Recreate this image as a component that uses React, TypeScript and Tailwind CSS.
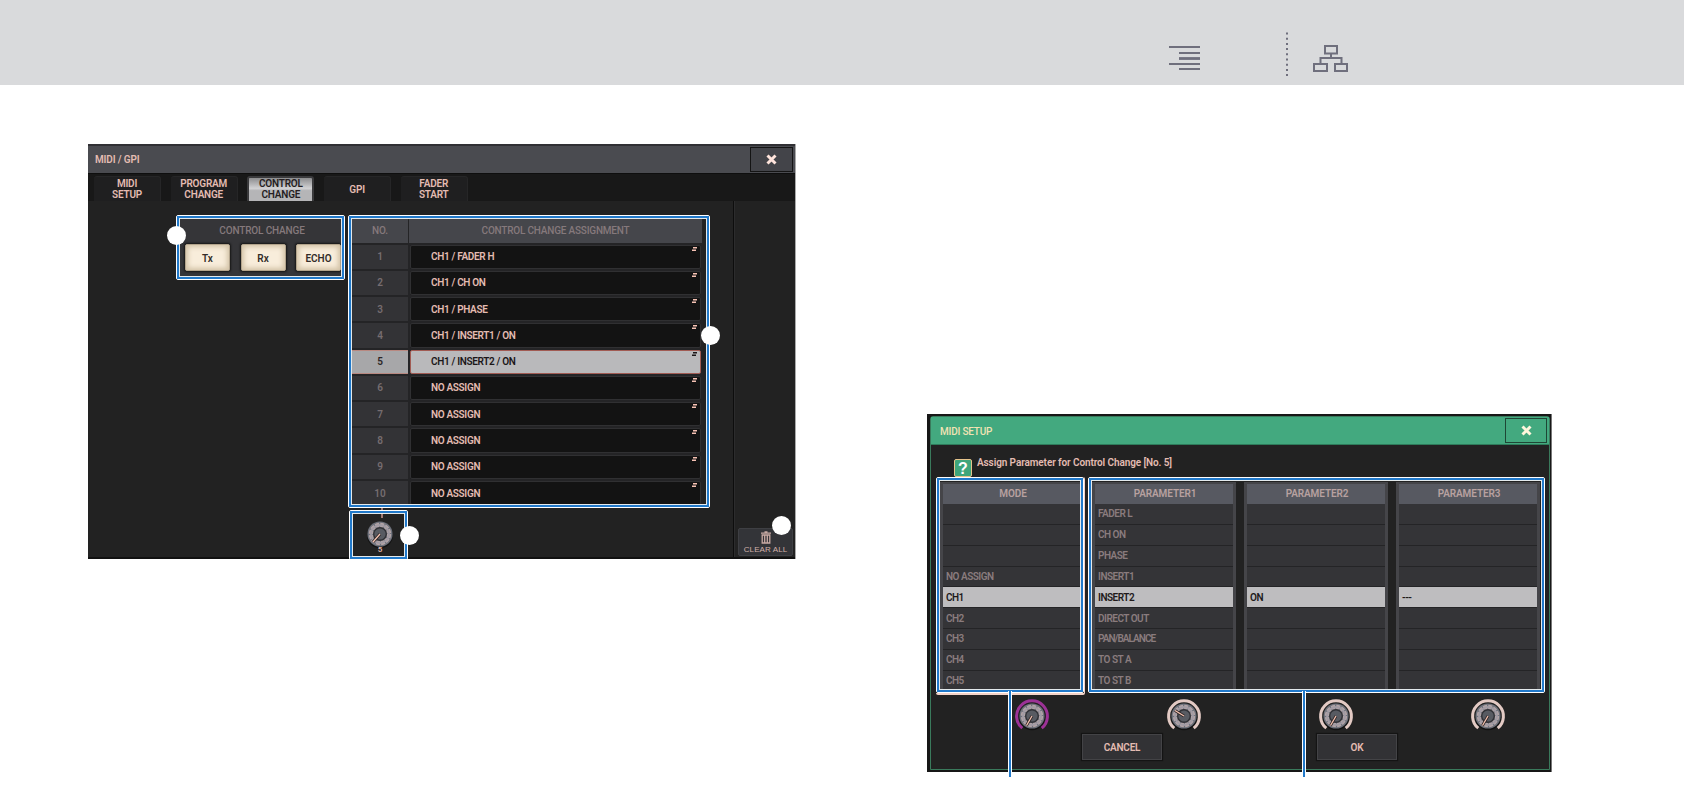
import clsx from "clsx";

const assignments = [
  "CH1 / FADER H",
  "CH1 / CH ON",
  "CH1 / PHASE",
  "CH1 / INSERT1 / ON",
  "CH1 / INSERT2 / ON",
  "NO ASSIGN",
  "NO ASSIGN",
  "NO ASSIGN",
  "NO ASSIGN",
  "NO ASSIGN",
];

const tabs = [
  ["MIDI", "SETUP"],
  ["PROGRAM", "CHANGE"],
  ["CONTROL", "CHANGE"],
  ["GPI"],
  ["FADER", "START"],
];

const modes = ["", "", "", "NO ASSIGN", "CH1", "CH2", "CH3", "CH4", "CH5"];

const parameters = [
  {
    title: "PARAMETER1",
    rows: [
      "FADER L",
      "CH ON",
      "PHASE",
      "INSERT1",
      "INSERT2",
      "DIRECT OUT",
      "PAN/BALANCE",
      "TO ST A",
      "TO ST B",
    ],
  },
  { title: "PARAMETER2", rows: ["", "", "", "", "ON", "", "", "", ""] },
  { title: "PARAMETER3", rows: ["", "", "", "", "---", "", "", "", ""] },
];

function Cross({ color }: { color: string }) {
  return (
    <svg width="11" height="11" viewBox="0 0 11 11">
      <path d="M1.5 1.5l8 8M9.5 1.5l-8 8" stroke={color} strokeWidth="3" />
    </svg>
  );
}

// Blue frame with a white edge on both sides
function Frame({ className }: { className: string }) {
  return (
    <div className={clsx("absolute border border-white rounded-[2px]", className)}>
      <div className="w-full h-full border-2 border-[#2179ca]">
        <div className="w-full h-full border border-[#e4eaec]" />
      </div>
    </div>
  );
}

function Dot({ className }: { className: string }) {
  return (
    <div
      className={clsx("absolute w-[19px] h-[19px] rounded-full bg-white", className)}
    />
  );
}

function Knob({ ring, x, y }: { ring?: string; x: number; y: number }) {
  return (
    <svg width="36" height="36" viewBox="-18 -18 36 36" className="block shrink-0">
      <circle r="13" cy="1.2" fill="#121212" />
      <circle r="12.6" fill="#6d717b" />
      <circle
        r="9"
        fill="none"
        stroke="#b3a4a6"
        strokeWidth="4.4"
        strokeDasharray="3.6 1.11"
      />
      <circle r="9" fill="none" stroke="#a19ba4" strokeWidth="2" />
      <circle r="7" fill="#303136" />
      <circle r="5.6" fill="#585b62" />
      <path d={`M0 0L${x} ${y}`} stroke="#2a2223" strokeWidth="2.8" />
      <path d={`M0 0L${x} ${y}`} stroke="#f6c4b2" strokeWidth="1.3" />
      {ring && (
        <path
          d="M-9.700 12.200A15.400 15.400 0 1 1 9.700 12.200"
          fill="none"
          stroke={ring}
          strokeWidth="3"
        />
      )}
    </svg>
  );
}

function Header() {
  return (
    <header className="h-[85px] bg-[#d9dadc] flex items-start pl-[1169px]">
      <svg width="31" height="26" viewBox="0 0 31 26" className="mt-[45px]">
        <g stroke="#6f6f7d" strokeWidth="2">
          <path d="M0 2h31M10 8h21M0 19h31M10 24h21" />
          <path d="M10 13.5h21" strokeWidth="2.8" />
        </g>
      </svg>
      <svg width="2" height="46" viewBox="0 0 2 46" className="ml-[86px] mt-8">
        <path d="M1 .5v45" stroke="#6f6f7d" strokeWidth="2" strokeDasharray="2 3.2" />
      </svg>
      <svg
        width="36"
        height="28"
        viewBox="0 0 36 28"
        fill="none"
        stroke="#6f6f7d"
        strokeWidth="2"
        className="ml-[25px] mt-[45px]"
      >
        <path d="M12 1h12v7.500H12zM1 19h13v7H1zM22 19h12v7H22zM18 8.500v4.500M7.500 19v-6h21v6" />
      </svg>
    </header>
  );
}

function AssignmentTable() {
  return (
    <div className="w-[351px] h-[286px] overflow-hidden bg-[#242426]">
      <div className="flex gap-px h-6 text-[#85797c] font-medium mb-[0.5px]">
        <div className="w-[56px] bg-[#45464b] flex items-center justify-center pb-0.5">
          NO.
        </div>
        <div className="w-[293px] bg-[#45464b] flex items-center justify-center pb-0.5 tracking-[-0.2px]">
          CONTROL CHANGE ASSIGNMENT
        </div>
      </div>
      {assignments.map((name, i) => {
        const selected = i === 4;
        return (
          <div key={i} className="flex gap-0.5 h-[26.27px] pt-px pb-px">
            <div
              className={clsx(
                "w-[56px] flex items-center justify-center",
                selected
                  ? "bg-[#a7a7a9] text-[#2b2526] border-y border-[#b88880]"
                  : "bg-[#333336] text-[#766d70]"
              )}
            >
              {i + 1}
            </div>
            <div
              className={clsx(
                "w-[291px] relative flex items-center pl-5 border rounded-[2px] tracking-[-0.33px]",
                selected
                  ? "bg-[#b9b9bb] text-[#1b1718] border-[#a15b53]"
                  : "bg-[#131313] text-[#e4bcb2] border-[#303032]"
              )}
            >
              {name}
              <svg
                width="5"
                height="5"
                viewBox="0 0 5 5"
                className="absolute right-[3px] top-[1px]"
              >
                <path
                  d="M1 .800h4M0 3.300h4"
                  stroke={selected ? "#1b1718" : "#f6c2b4"}
                  strokeWidth="1.5"
                />
              </svg>
            </div>
          </div>
        );
      })}
    </div>
  );
}

function ControlChangeWindow() {
  return (
    <section className="relative w-[708px] h-[415px] bg-[#222222] border-r border-[#aaa] text-[#e4bcb2]">
      <div className="h-[29px] bg-[#4a4b50] border-t-2 border-[#303034] flex items-center justify-between pl-[7px] pr-[2px]">
        <span className="tracking-[-0.15px]">MIDI / GPI</span>
        <div className="w-[43px] h-[25px] bg-[#434449] border border-[#141414] flex items-center justify-center">
          <Cross color="#ffe4dc" />
        </div>
      </div>
      <div className="h-7 bg-[#181818] border-t border-[#0e0e0e] flex gap-[9.7px] pl-[6px] pt-[2px]">
        {tabs.map((lines, i) => (
          <div
            key={i}
            className={clsx(
              "w-[67px] rounded-t-[3px] flex flex-col items-center justify-center leading-[11px] tracking-[-0.2px]",
              i === 2
                ? "text-[#251e1f] border-2 border-b-0 border-[#3a3a3c] bg-linear-to-b from-[#8d8d8f] from-0% via-[#d2d2d4] via-45% to-[#b5b5b7] to-55%"
                : "bg-[#1f1f20] border-t border-r border-[#262627]"
            )}
          >
            {lines.map((line) => (
              <span key={line} className={i === 2 ? "relative -top-px" : ""}>
                {line}
              </span>
            ))}
          </div>
        ))}
      </div>
      <div className="flex h-[358px] border-b-2 border-[#111]">
        <div className="w-[264px] pl-[91px] pt-[18px]">
          <div className="w-[162px] h-[58px] bg-[#353538] overflow-hidden">
            <div className="h-[25px] flex items-start justify-center pt-[4px] pl-1 leading-[15px] text-[#85797c] font-medium tracking-[-0.15px]">
              CONTROL CHANGE
            </div>
            <div className="flex gap-[10.5px] pl-1.5 text-[#332c29]">
              {["Tx", "Rx", "ECHO"].map((name) => (
                <div
                  key={name}
                  className="w-[45px] shrink-0 h-[27px] rounded-[2px] border border-[#b3a48c] bg-[#f8eddb] shadow-[inset_0_0_5px_2px_#d2c2a6,0_0_2px_1px_#161616] flex items-center justify-center pt-px"
                >
                  {name}
                </div>
              ))}
            </div>
          </div>
        </div>
        <div className="w-[382px] border-r border-[#0d0d0d] pt-[18px]">
          <AssignmentTable />
          <div className="w-[56px] h-[53px] flex flex-col items-center">
            <div className="w-[2px] h-[13px] bg-[#a07a74] ml-1 shrink-0" />
            <div className="-my-0.5">
              <Knob x={-7} y={8} />
            </div>
            <span className="text-[8px] leading-[8px] -mt-1">5</span>
          </div>
        </div>
        <div className="flex-1 border-l border-[#2c2c2d] flex items-end pl-[3px] pb-px">
          <div className="w-[55px] h-[28px] rounded-[2px] bg-[#333438] border border-[#3e3f43] flex flex-col items-center pt-[2px]">
            <svg width="10" height="13" viewBox="0 0 10 13" className="shrink-0">
              <path
                d="M0 2.200h10M3.500 1h3M1.200 4h7.600v8H1.200zM3.700 4v8M6.300 4v8"
                fill="none"
                stroke="#c9aaa4"
                strokeWidth="1.3"
              />
            </svg>
            <span className="mt-px text-[8px] leading-[10px] font-medium text-[#d1b0a8] font-['Liberation_Sans'] whitespace-nowrap tracking-[0.1px]">
              CLEAR ALL
            </span>
          </div>
        </div>
      </div>
      <Frame className="left-[88px] top-[71px] w-[169px] h-[65px]" />
      <Frame className="left-[260px] top-[71px] w-[362px] h-[293px]" />
      <Frame className="left-[261px] top-[366px] w-[59px] h-[50px]" />
      <Dot className="left-[78.500px] top-[82px]" />
      <Dot className="left-[612.500px] top-[182px]" />
      <Dot className="left-[312px] top-[382px]" />
      <Dot className="left-[683.500px] top-[371.500px]" />
    </section>
  );
}

function Column({ title, rows }: { title: string; rows: string[] }) {
  return (
    <div className="w-[144px] h-[208px] overflow-hidden bg-[#454549] px-[3px] pt-[2px] shrink-0">
      <div className="h-5 bg-[#575961] flex items-center justify-center pl-0.5 pb-0.5 text-[#b8a1a0] tracking-[-0.1px]">
        {title}
      </div>
      {rows.map((row, i) => (
        <div
          key={i}
          className={clsx(
            "h-[20.85px] border-b border-[#242426] flex items-center pl-[3px]",
            row.length > 10 ? "tracking-[-0.95px]" : "tracking-[-0.5px]",
            i === 4 ? "bg-[#bebdbf] text-[#211a1b]" : "bg-[#343437] text-[#8a7c7e]"
          )}
        >
          {row}
        </div>
      ))}
    </div>
  );
}

function SetupWindow() {
  return (
    <section className="relative w-[625px] h-[358px] bg-[#171717] border-r border-[#777] pt-[2px] pl-[3px] pr-[1px] text-[#e4bcb2]">
      <div className="w-[620px] h-[354px] border border-[#3a7a5c] bg-[#222222] rounded-t-[3px]">
        <div className="h-[28px] bg-[#43a97f] border-b border-[#2e7c5b] flex items-center justify-between pl-[9px] pr-[2px] text-[#f2e3b4]">
          <span className="font-medium tracking-[-0.2px] pt-[1px]">MIDI SETUP</span>
          <div className="w-[42px] h-[25px] border border-[#1e4635] flex items-center justify-center">
            <Cross color="#fff6dc" />
          </div>
        </div>
        <div className="flex h-[37px] pl-[23px] pt-[14px]">
          <div className="w-[18px] h-[18px] rounded-[2px] border border-[#e6c48c] bg-[#3fa67b] text-white font-bold text-[16px] leading-[17px] text-center font-['Liberation_Sans']">
            ?
          </div>
          <div className="pl-[5px] -mt-[3px] leading-[14px] whitespace-pre tracking-[-0.1px]">
            Assign Parameter for Control Change [No. 5]
          </div>
        </div>
        <div className="flex pl-[9px]">
          <Column title="MODE" rows={modes} />
          <div className="flex gap-[8px] ml-[8px]">
            {parameters.map((p) => (
              <Column key={p.title} title={p.title} rows={p.rows} />
            ))}
          </div>
        </div>
        <div className="flex gap-[116px] pl-[83px] pt-[8px]">
          <Knob ring="#9c3296" x={-5.5} y={9.5} />
          <Knob ring="#e3cac4" x={-9} y={-5.5} />
          <Knob ring="#e3cac4" x={-5.5} y={9.5} />
          <Knob ring="#e3cac4" x={-5.5} y={9.5} />
        </div>
        <div className="flex gap-[155px] pl-[151px]">
          {["CANCEL", "OK"].map((name) => (
            <div
              key={name}
              className="w-[80px] h-[26px] bg-[#323235] border border-[#434346] shadow-[0_0_1px_1px_#141414] flex items-center justify-center tracking-[-0.2px]"
            >
              {name}
            </div>
          ))}
        </div>
      </div>
      <div className="absolute left-[9px] top-[63px] w-[149px] h-[218px] rounded-[2px] border-r border-b-2 border-[#f3d3c8]" />
      <Frame className="left-[9px] top-[63px] w-[148px] h-[216px]" />
      <Frame className="left-[161px] top-[63px] w-[457px] h-[216px]" />
      <div className="absolute left-[81px] top-[277px] w-[4px] h-[86px] bg-[#2179ca] border-x border-white" />
      <div className="absolute left-[375px] top-[277px] w-[4px] h-[86px] bg-[#2179ca] border-x border-white" />
    </section>
  );
}

export default function App() {
  return (
    <div className="w-[1684px] h-[791px] overflow-hidden bg-white text-[10px] font-semibold font-['Roboto',sans-serif]">
      <Header />
      <main className="flex items-start pl-[88px]">
        <div className="pt-[59px]">
          <ControlChangeWindow />
        </div>
        <div className="pl-[131px] pt-[329px]">
          <SetupWindow />
        </div>
      </main>
    </div>
  );
}
